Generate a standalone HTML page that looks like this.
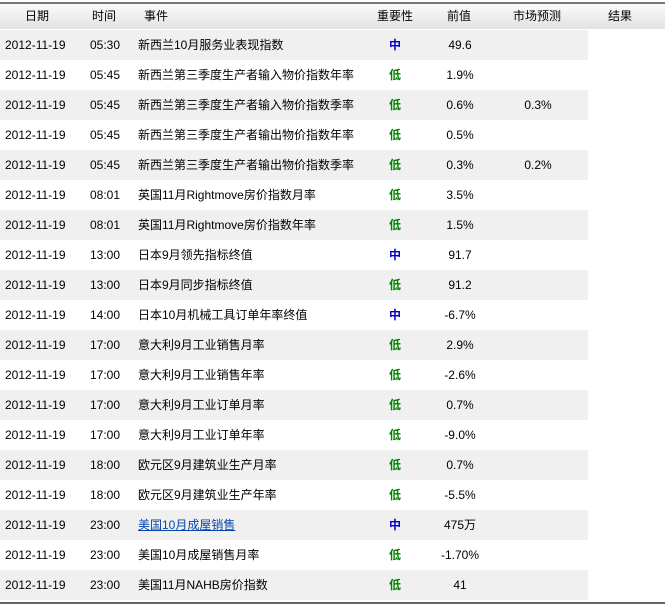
<!DOCTYPE html><html><head><meta charset="utf-8"><style>
body{margin:0;width:665px;height:608px;background:#fff;font-family:"Liberation Sans","Noto Sans CJK SC",sans-serif;font-size:12px;color:#000;position:relative;overflow:hidden}
.h{position:absolute;left:0;top:2px;width:665px;height:27px;border-top:2px solid #777;background:linear-gradient(#fafafa,#e2e2e2);box-sizing:border-box}
.h span,.r span{position:absolute;top:0;line-height:25px;white-space:nowrap}
.r{position:absolute;left:0;width:665px;height:30px}
.r span{line-height:30px}
.g{background:linear-gradient(90deg,#f0f0f0 588px,#fff 588px)}
.c{text-align:center}
.m{color:#0000cc;font-weight:bold}.l{color:#008000;font-weight:bold}
a{color:#0645ad;text-decoration:underline}
.b{position:absolute;left:0;top:602px;width:665px;height:2px;background:#666}
</style></head><body>
<div class="h"><span style="left:25px">日期</span><span style="left:92px">时间</span><span style="left:144px">事件</span><span style="left:377px">重要性</span><span style="left:447px">前值</span><span style="left:513px">市场预测</span><span style="left:608px">结果</span></div>
<div id="t"></div>
<div class="b"></div>
<script>
var d=[["05:30","新西兰10月服务业表现指数","中","49.6",""],["05:45","新西兰第三季度生产者输入物价指数年率","低","1.9%",""],["05:45","新西兰第三季度生产者输入物价指数季率","低","0.6%","0.3%"],["05:45","新西兰第三季度生产者输出物价指数年率","低","0.5%",""],["05:45","新西兰第三季度生产者输出物价指数季率","低","0.3%","0.2%"],["08:01","英国11月Rightmove房价指数月率","低","3.5%",""],["08:01","英国11月Rightmove房价指数年率","低","1.5%",""],["13:00","日本9月领先指标终值","中","91.7",""],["13:00","日本9月同步指标终值","低","91.2",""],["14:00","日本10月机械工具订单年率终值","中","-6.7%",""],["17:00","意大利9月工业销售月率","低","2.9%",""],["17:00","意大利9月工业销售年率","低","-2.6%",""],["17:00","意大利9月工业订单月率","低","0.7%",""],["17:00","意大利9月工业订单年率","低","-9.0%",""],["18:00","欧元区9月建筑业生产月率","低","0.7%",""],["18:00","欧元区9月建筑业生产年率","低","-5.5%",""],["23:00","<a>美国10月成屋销售</a>","中","475万",""],["23:00","美国10月成屋销售月率","低","-1.70%",""],["23:00","美国11月NAHB房价指数","低","41",""]];
var h="";d.forEach(function(r,i){h+='<div class="r'+(i%2==0?' g':'')+'" style="top:'+(30+i*30)+'px"><span style="left:5px">2012-11-19</span><span style="left:90px">'+r[0]+'</span><span style="left:138px">'+r[1]+'</span><span class="c '+(r[2]=="中"?"m":"l")+'" style="left:375px;width:40px">'+r[2]+'</span><span class="c" style="left:420px;width:80px">'+r[3]+'</span><span class="c" style="left:498px;width:80px">'+r[4]+'</span></div>'});
document.getElementById("t").innerHTML=h;
</script>
</body></html>
